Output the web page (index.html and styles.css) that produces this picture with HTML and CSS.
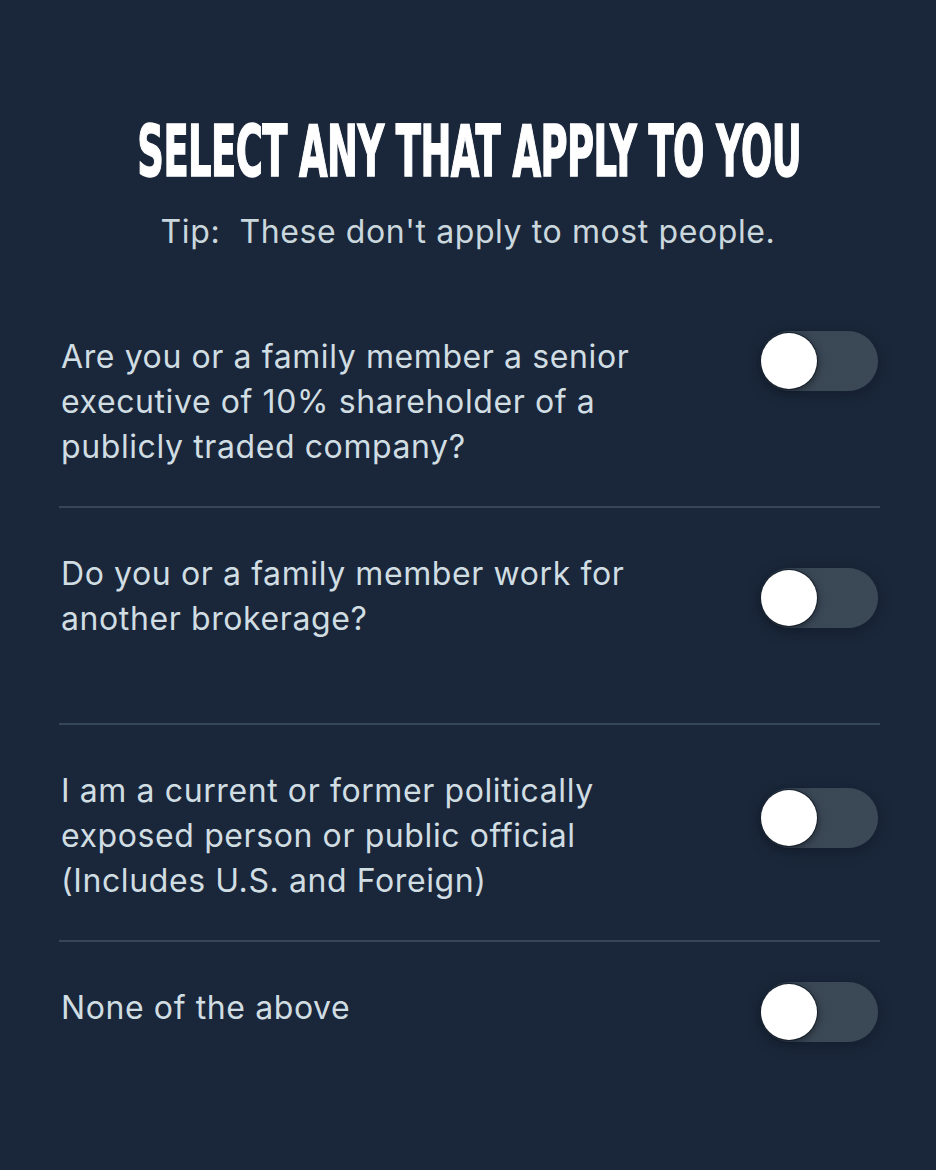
FILE: index.html
```html
<!DOCTYPE html>
<html lang="en">
<head>
<meta charset="utf-8">
<title>Select any that apply to you</title>
<link rel="stylesheet" href="styles.css">
</head>
<body>
<main class="page">
  <header class="header">
    <h1 class="title"><span class="title-text">SELECT ANY THAT APPLY TO YOU</span></h1>
    <p class="tip">Tip:&nbsp; These don't apply to most people.</p>
  </header>
  <ul class="list">
    <li class="row">
      <span class="label">Are you or a family member a senior executive of 10% shareholder of a publicly traded company?</span>
      <span class="toggle toggle-a"><span class="knob"></span></span>
    </li>
    <li class="row">
      <span class="label">Do you or a family member work for another brokerage?</span>
      <span class="toggle toggle-b"><span class="knob"></span></span>
    </li>
    <li class="row">
      <span class="label">I am a current or former politically exposed person or public official (Includes U.S. and Foreign)</span>
      <span class="toggle toggle-c"><span class="knob"></span></span>
    </li>
    <li class="row row-last">
      <span class="label">None of the above</span>
      <span class="toggle toggle-a"><span class="knob"></span></span>
    </li>
  </ul>
</main>
</body>
</html>
```

FILE: styles.css
```css
html, body {
  margin: 0;
  padding: 0;
  background: #1a273a;
}
body {
  width: 936px;
  height: 1170px;
  overflow: hidden;
  font-family: Inter, "Noto Sans", sans-serif;
  color: #d2dee3;
}
.page {
  padding: 0 56px 0 59px;
}
.header {
  padding-top: 113px;
  text-align: center;
}
.title {
  display: flex;
  justify-content: center;
  margin: 0;
  font-family: "DejaVu Sans Condensed", "DejaVu Sans", sans-serif;
  font-weight: bold;
  font-size: 72px;
  line-height: 76px;
  color: #ffffff;
  white-space: nowrap;
}
.title-text {
  display: inline-block;
  flex: none;
  transform: scaleX(0.57);
  transform-origin: center;
  letter-spacing: -1px;
  -webkit-text-stroke: 1.5px #ffffff;
}
.tip {
  margin: 23px 0 0;
  font-size: 32px;
  line-height: 40px;
  letter-spacing: 0.6px;
  color: #cad7dd;
  padding-right: 3px;
}
.list {
  list-style: none;
  margin: 39px 0 0;
  padding: 0;
}
.row {
  display: flex;
  justify-content: space-between;
  align-items: flex-start;
  box-sizing: border-box;
  min-height: 217px;
  padding: 43px 0 0 2px;
  border-bottom: 2px solid #37475a;
}
.row-last {
  border-bottom: none;
}
.label {
  width: 650px;
  font-size: 32px;
  line-height: 45px;
  letter-spacing: 0.6px;
  color: #d0dde2;
}
.toggle {
  display: flex;
  align-items: center;
  flex: none;
  box-sizing: border-box;
  width: 118px;
  height: 60px;
  padding: 0 1px;
  margin-right: 2px;
  border-radius: 30px;
  background: linear-gradient(90deg, #2a3848 0%, #3a4755 45%, #3b4856 100%);
  box-shadow: 0 3px 14px rgba(8, 14, 24, 0.35);
}
.toggle-a { margin-top: -3px; }
.toggle-b { margin-top: 17px; }
.toggle-c { margin-top: 20px; }
.knob {
  width: 56px;
  height: 56px;
  border-radius: 50%;
  background: #ffffff;
  box-shadow: 0 0 0 1px rgba(10, 18, 30, 0.6), 2px 2px 6px rgba(0, 0, 0, 0.35);
}
```
